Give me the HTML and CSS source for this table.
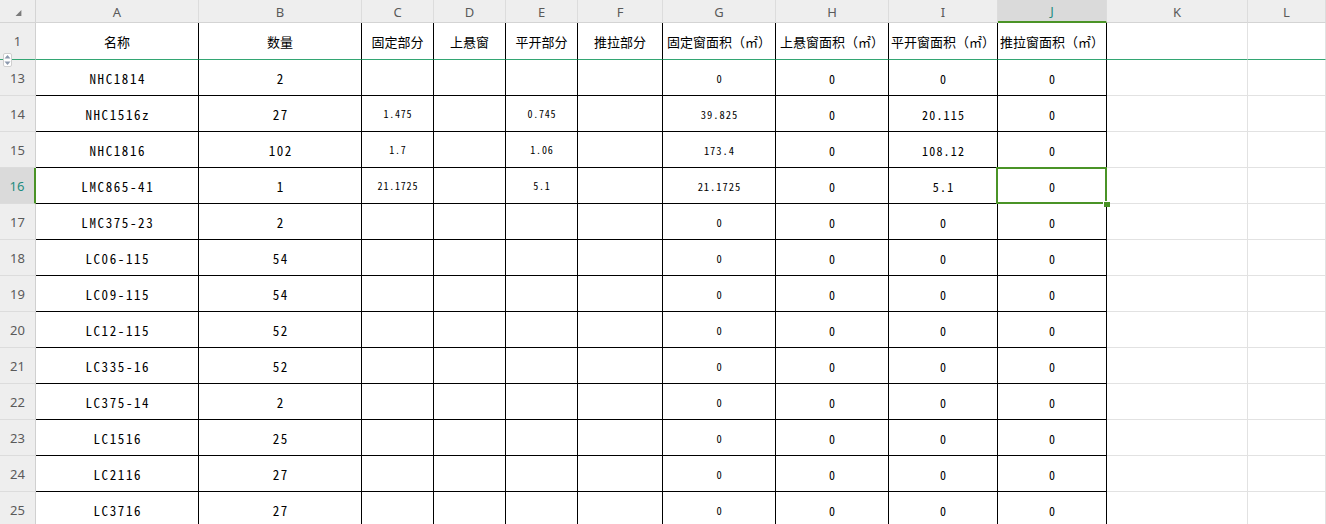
FILE: index.html
```html
<!DOCTYPE html>
<html lang="zh-CN">
<head>
<meta charset="utf-8">
<title>Sheet</title>
<link rel="stylesheet" href="styles.css">
</head>
<body>
<div class="sheet">
  <!-- column header row -->
  <div class="ch corner"><svg width="36" height="23" viewBox="0 0 36 23"><polygon points="22,10 22,16 16,16" fill="#7a7a7a"/></svg></div>
  <div class="ch">A</div><div class="ch">B</div><div class="ch">C</div><div class="ch">D</div><div class="ch">E</div><div class="ch">F</div><div class="ch">G</div><div class="ch">H</div><div class="ch">I</div><div class="ch sel-col">J</div><div class="ch">K</div><div class="ch">L</div>

  <!-- row 1 (frozen) -->
  <div class="rh frz">1<span class="handle"><svg width="9" height="14" viewBox="0 0 9 14"><polygon points="4.5,2 7.5,5.5 1.5,5.5" fill="#8d9aae"/><polygon points="4.5,12 7.5,8.5 1.5,8.5" fill="#8d9aae"/></svg></span></div>
  <div class="c frz hd">名称</div><div class="c frz hd">数量</div><div class="c frz hd">固定部分</div><div class="c frz hd">上悬窗</div><div class="c frz hd">平开部分</div><div class="c frz hd">推拉部分</div><div class="c frz hd">固定窗面积（㎡）</div><div class="c frz hd">上悬窗面积（㎡）</div><div class="c frz hd">平开窗面积（㎡）</div><div class="c frz hd">推拉窗面积（㎡）</div><div class="e frz"></div><div class="e frz"></div>

  <div class="rh">13</div><div class="c nm">NHC1814</div><div class="c nm">2</div><div class="c sm"></div><div class="c sm"></div><div class="c sm"></div><div class="c sm"></div><div class="c g">0</div><div class="c n">0</div><div class="c n">0</div><div class="c n">0</div><div class="e"></div><div class="e"></div>

  <div class="rh">14</div><div class="c nm">NHC1516z</div><div class="c nm">27</div><div class="c sm">1.475</div><div class="c sm"></div><div class="c sm">0.745</div><div class="c sm"></div><div class="c g">39.825</div><div class="c n">0</div><div class="c n">20.115</div><div class="c n">0</div><div class="e"></div><div class="e"></div>

  <div class="rh">15</div><div class="c nm">NHC1816</div><div class="c nm">102</div><div class="c sm">1.7</div><div class="c sm"></div><div class="c sm">1.06</div><div class="c sm"></div><div class="c g">173.4</div><div class="c n">0</div><div class="c n">108.12</div><div class="c n">0</div><div class="e"></div><div class="e"></div>

  <div class="rh sel-row">16</div><div class="c nm">LMC865-41</div><div class="c nm">1</div><div class="c sm">21.1725</div><div class="c sm"></div><div class="c sm">5.1</div><div class="c sm"></div><div class="c g">21.1725</div><div class="c n">0</div><div class="c n">5.1</div><div class="c n active">0<span class="sel-box"></span><span class="fill-handle"></span></div><div class="e"></div><div class="e"></div>

  <div class="rh">17</div><div class="c nm">LMC375-23</div><div class="c nm">2</div><div class="c sm"></div><div class="c sm"></div><div class="c sm"></div><div class="c sm"></div><div class="c g">0</div><div class="c n">0</div><div class="c n">0</div><div class="c n">0</div><div class="e"></div><div class="e"></div>

  <div class="rh">18</div><div class="c nm">LC06-115</div><div class="c nm">54</div><div class="c sm"></div><div class="c sm"></div><div class="c sm"></div><div class="c sm"></div><div class="c g">0</div><div class="c n">0</div><div class="c n">0</div><div class="c n">0</div><div class="e"></div><div class="e"></div>

  <div class="rh">19</div><div class="c nm">LC09-115</div><div class="c nm">54</div><div class="c sm"></div><div class="c sm"></div><div class="c sm"></div><div class="c sm"></div><div class="c g">0</div><div class="c n">0</div><div class="c n">0</div><div class="c n">0</div><div class="e"></div><div class="e"></div>

  <div class="rh">20</div><div class="c nm">LC12-115</div><div class="c nm">52</div><div class="c sm"></div><div class="c sm"></div><div class="c sm"></div><div class="c sm"></div><div class="c g">0</div><div class="c n">0</div><div class="c n">0</div><div class="c n">0</div><div class="e"></div><div class="e"></div>

  <div class="rh">21</div><div class="c nm">LC335-16</div><div class="c nm">52</div><div class="c sm"></div><div class="c sm"></div><div class="c sm"></div><div class="c sm"></div><div class="c g">0</div><div class="c n">0</div><div class="c n">0</div><div class="c n">0</div><div class="e"></div><div class="e"></div>

  <div class="rh">22</div><div class="c nm">LC375-14</div><div class="c nm">2</div><div class="c sm"></div><div class="c sm"></div><div class="c sm"></div><div class="c sm"></div><div class="c g">0</div><div class="c n">0</div><div class="c n">0</div><div class="c n">0</div><div class="e"></div><div class="e"></div>

  <div class="rh">23</div><div class="c nm">LC1516</div><div class="c nm">25</div><div class="c sm"></div><div class="c sm"></div><div class="c sm"></div><div class="c sm"></div><div class="c g">0</div><div class="c n">0</div><div class="c n">0</div><div class="c n">0</div><div class="e"></div><div class="e"></div>

  <div class="rh">24</div><div class="c nm">LC2116</div><div class="c nm">27</div><div class="c sm"></div><div class="c sm"></div><div class="c sm"></div><div class="c sm"></div><div class="c g">0</div><div class="c n">0</div><div class="c n">0</div><div class="c n">0</div><div class="e"></div><div class="e"></div>

  <div class="rh">25</div><div class="c nm">LC3716</div><div class="c nm">27</div><div class="c sm"></div><div class="c sm"></div><div class="c sm"></div><div class="c sm"></div><div class="c g">0</div><div class="c n">0</div><div class="c n">0</div><div class="c n">0</div><div class="e"></div><div class="e"></div>
</div>
</body>
</html>
```

FILE: styles.css
```css
html, body {
  margin: 0;
  padding: 0;
  background: #ffffff;
  overflow: hidden;
  width: 1326px;
  height: 524px;
}

.sheet {
  display: grid;
  grid-template-columns: 36px 163px 163px 72px 72px 72px 85px 113px 113px 109px 109px 141px 1fr;
  grid-template-rows: 23px 37px repeat(13, 36px);
  width: 1326px;
  font-family: "Noto Sans Mono CJK SC", "Liberation Mono", monospace;
  color: #000;
}

.sheet > div {
  box-sizing: border-box;
  display: flex;
  align-items: center;
  justify-content: center;
  white-space: nowrap;
  overflow: visible;
}

/* column headers */
.ch {
  background: #eeeeee;
  border-right: 1px solid #dcdcdc;
  border-bottom: 1px solid #d4d4d4;
  font-family: "Noto Sans", "Liberation Sans", sans-serif;
  font-size: 13px;
  color: #5a5a5a;
  padding-top: 1px;
}
.corner {
  border-right: 1px solid #d4d4d4;
  padding: 0;
}
.corner svg { display: block; }
.sel-col {
  background: #dadada;
  border-bottom: 2px solid #4a9326;
  color: #1f8c80;
}

/* row headers */
.rh {
  background: #eeeeee;
  border-right: 1px solid #d0d0d0;
  border-bottom: 1px solid #dcdcdc;
  font-family: "Noto Sans", "Liberation Sans", sans-serif;
  font-size: 13px;
  color: #5a5a5a;
  position: relative;
}
.sel-row {
  background: #dadada;
  border-right: 2px solid #4a9326;
  color: #1f8c80;
}

/* data cells */
.c {
  border-right: 1px solid #000;
  border-bottom: 1px solid #000;
  background: #fff;
}
.e {
  border-right: 1px solid #e2e2e2;
  border-bottom: 1px solid #e2e2e2;
  background: #fff;
}

/* frozen first row */
.frz {
  border-bottom: 1px solid #33a673 !important;
}

.hd {
  font-family: "Noto Sans CJK SC", sans-serif;
  font-size: 13px;
}
.nm {
  font-size: 13px;
  letter-spacing: 1.6px;
  padding-left: 1.6px;
  padding-top: 2px;
}
.sm {
  font-size: 10px;
  letter-spacing: 0.8px;
  padding-left: 0.8px;
}
.g {
  font-size: 10.5px;
  letter-spacing: 1px;
  padding-left: 1px;
  padding-top: 1px;
}
.n {
  font-size: 12px;
  letter-spacing: 1.2px;
  padding-left: 1.2px;
  padding-top: 1px;
}

/* selection */
.active { position: relative; }
.sel-box {
  position: absolute;
  left: -2px;
  top: -1px;
  width: 111px;
  height: 37px;
  box-sizing: border-box;
  border: 2px solid #4a9326;
  pointer-events: none;
}
.fill-handle {
  position: absolute;
  left: 105px;
  top: 33px;
  width: 6px;
  height: 5px;
  background: #4a9326;
  border: 1px solid #fff;
  border-right: none;
  border-bottom: none;
}

/* freeze handle */
.handle {
  position: absolute;
  z-index: 2;
  left: 3px;
  top: 30px;
  width: 9px;
  height: 14px;
  box-sizing: border-box;
  background: #fff;
  border: 1px solid #cfcfcf;
  border-radius: 2px;
  display: flex;
  align-items: center;
  justify-content: center;
}
.handle svg {
  display: block;
  width: 9px;
  height: 14px;
  flex: none;
}
```
